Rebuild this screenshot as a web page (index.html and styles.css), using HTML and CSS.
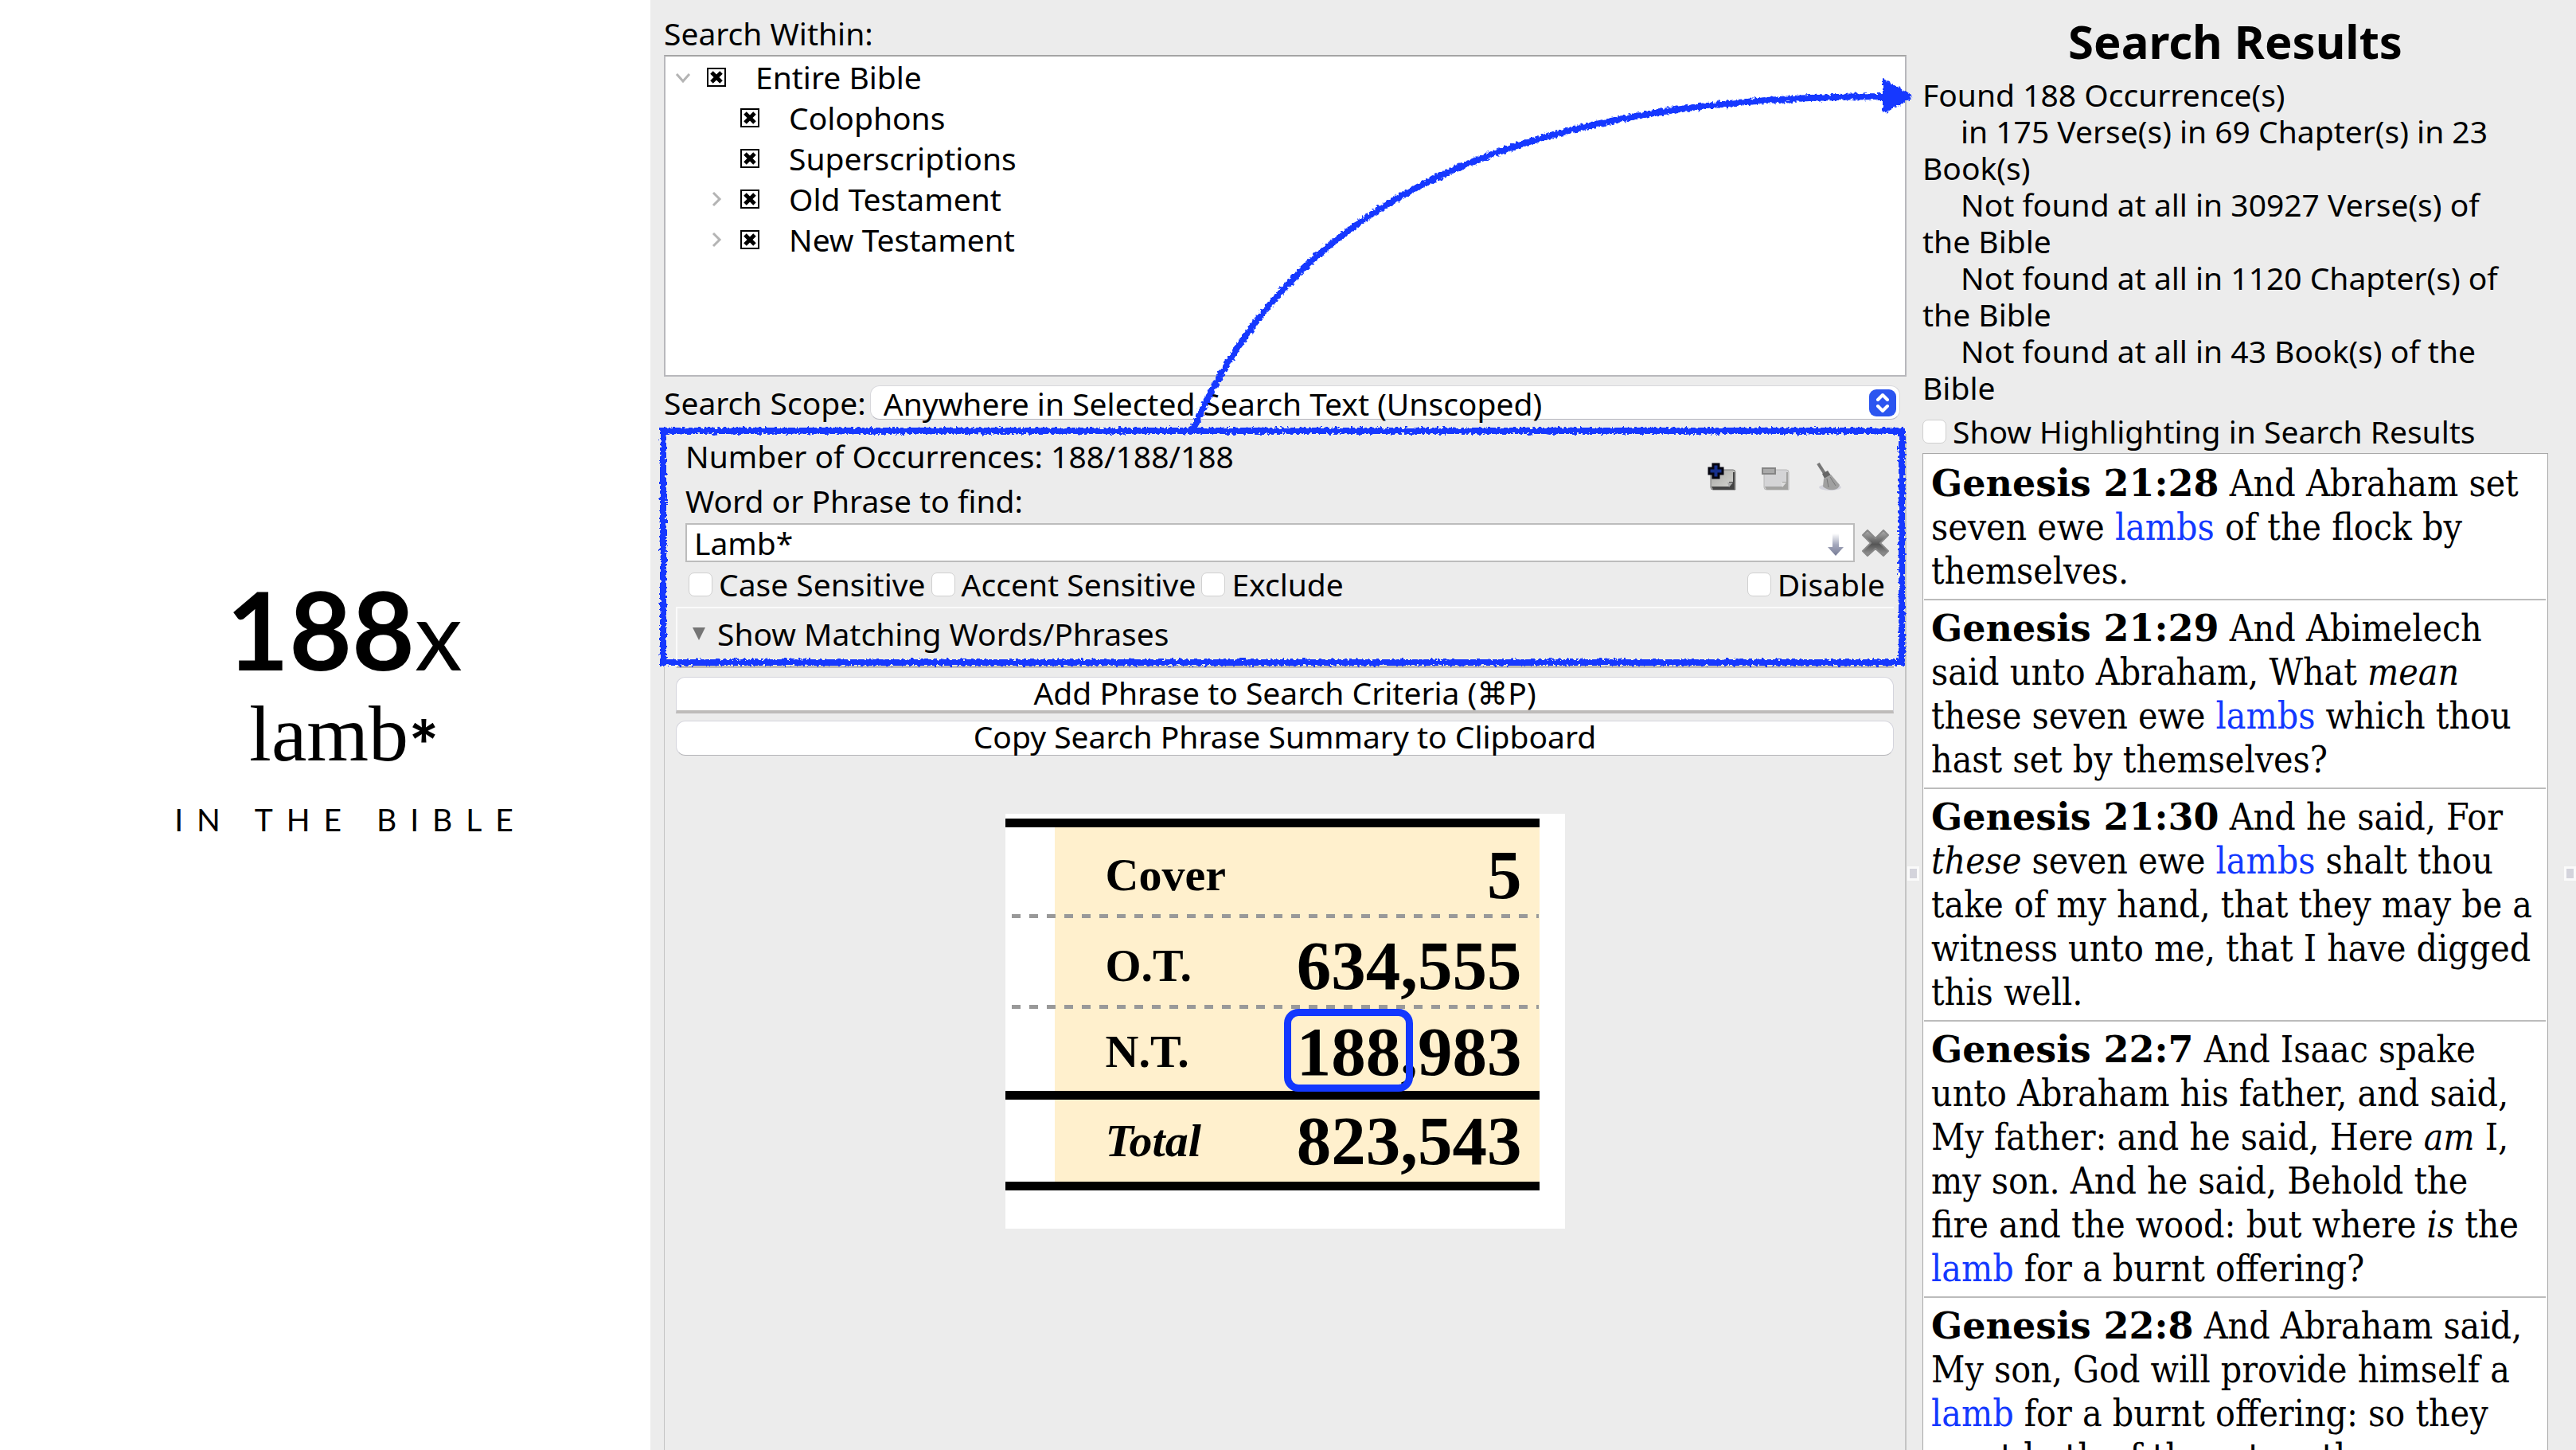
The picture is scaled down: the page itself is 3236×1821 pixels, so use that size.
FILE: index.html
```html
<!DOCTYPE html>
<html lang="en">
<head>
<meta charset="utf-8">
<title>188x lamb* in the Bible</title>
<link rel="stylesheet" href="styles.css">
</head>
<body>
<svg class="defs" width="0" height="0" aria-hidden="true">
  <filter id="rough" x="-2%" y="-5%" width="104%" height="110%">
    <feTurbulence type="fractalNoise" baseFrequency="0.25" numOctaves="2" seed="4" result="noise"/>
    <feDisplacementMap in="SourceGraphic" in2="noise" scale="7" xChannelSelector="R" yChannelSelector="G"/>
  </filter>
</svg>
<main class="app">
  <section class="title">
    <h1 class="title-count">188<span class="title-times">x</span></h1>
    <p class="title-word">lamb<span class="title-star">*</span></p>
    <p class="title-where">IN THE BIBLE</p>
  </section>

  <section class="search">
    <h2 class="label">Search Within:</h2>
    <ul class="tree">
      <li class="tree-row"><svg class="chevron" viewBox="0 0 20 20"><path d="M2 6l8 9 8-9"/></svg><label><input type="checkbox" class="tick" checked>Entire Bible</label></li>
      <li class="tree-row child"><span class="chevron"></span><label><input type="checkbox" class="tick" checked>Colophons</label></li>
      <li class="tree-row child"><span class="chevron"></span><label><input type="checkbox" class="tick" checked>Superscriptions</label></li>
      <li class="tree-row child"><svg class="chevron" viewBox="0 0 20 20"><path d="M6 2l8 8-8 8"/></svg><label><input type="checkbox" class="tick" checked>Old Testament</label></li>
      <li class="tree-row child"><svg class="chevron" viewBox="0 0 20 20"><path d="M6 2l8 8-8 8"/></svg><label><input type="checkbox" class="tick" checked>New Testament</label></li>
    </ul>

    <div class="scope">
      <label for="scope">Search Scope:</label>
      <div class="select-wrap">
        <select id="scope"><option>Anywhere in Selected Search Text (Unscoped)</option></select>
        <svg class="stepper" viewBox="0 0 34 34"><rect width="34" height="34" rx="9" fill="#2b55f0"/><path d="M11 13l6-6 6 6M11 21l6 6 6-6" fill="none" stroke="#fff" stroke-width="4" stroke-linecap="round" stroke-linejoin="round"/></svg>
      </div>
    </div>

    <div class="criteria">
      <div class="phrase">
        <div class="phrase-body">
          <div class="phrase-head">
            <div>
              <p class="line">Number of Occurrences: 188/188/188</p>
              <label class="line" for="find">Word or Phrase to find:</label>
            </div>
            <div class="tools">
              <button class="tool" aria-label="Add phrase"><svg viewBox="0 0 36 36"><defs><linearGradient id="page" x2="1" y2="1"><stop stop-color="#a8a8a4"/><stop offset="1" stop-color="#d8d8d4"/></linearGradient></defs><path d="M4 9h28q3 0 3 3v22H7q-3 0-3-3z" fill="url(#page)" stroke="#777" stroke-width="1"/><path d="M34 12v22H7l-2-4h22v-6h5V12z" fill="#444"/><path d="M25 25h7l-5 6z" fill="#aaa"/><path d="M7 2h7v5h5v7h-5v5H7v-5H2V7h5z" fill="#17308c" stroke="#050510" stroke-width="3"/></svg></button>
              <button class="tool" aria-label="Remove phrase"><svg viewBox="0 0 36 36"><path d="M4 9h28q3 0 3 3v22H7q-3 0-3-3z" fill="#d4d4d6" stroke="#b8b8b8" stroke-width="1"/><path d="M34 12v22H7l-2-4h22v-6h5V12z" fill="#a2a2a0"/><path d="M25 25h7l-5 6z" fill="#ddd"/><path d="M2 7h16v7H2z" fill="#aaa" stroke="#858585" stroke-width="2"/></svg></button>
              <button class="tool" aria-label="Clear phrases"><svg viewBox="0 0 36 36"><ellipse cx="20" cy="31" rx="14" ry="4" fill="#d4d4dc"/><path d="M5 1l9 14" stroke="#777" stroke-width="4"/><path d="M10 14l7-4 4 6-8 4z" fill="#666"/><path d="M12 20l9-5 11 13q-1 5-7 6-9 1-14-4z" fill="#a0a0a0"/><path d="M16 20l2 11M20 18l7 11" stroke="#777" stroke-width="1"/></svg></button>
            </div>
          </div>
          <div class="find">
            <div class="find-box">
              <input type="text" id="find" value="Lamb*">
              <svg class="down" viewBox="0 0 20 28"><defs><linearGradient id="fade" x2="0" y2="1"><stop stop-color="#fff"/><stop offset=".5" stop-color="#a4a8bc"/><stop offset="1" stop-color="#777c96"/></linearGradient></defs><path d="M6 0h8v17h6l-10 11-10-11h6z" fill="url(#fade)"/></svg>
            </div>
            <button class="clear" aria-label="Clear text"><svg viewBox="0 0 34 34"><defs><linearGradient id="steel" x2="0" y2="1"><stop stop-color="#b0b0b0"/><stop offset=".55" stop-color="#555"/><stop offset="1" stop-color="#999"/></linearGradient></defs><path d="M7 1l10 10L27 1l6 6-10 10 10 10-6 6-10-9-10 9-6-6 10-10L1 7z" fill="url(#steel)" stroke="#888" stroke-width="2" stroke-linejoin="round"/></svg></button>
          </div>
          <div class="options">
            <label><input type="checkbox" class="box">Case Sensitive</label>
            <label><input type="checkbox" class="box">Accent Sensitive</label>
            <label><input type="checkbox" class="box">Exclude</label>
            <label class="last"><input type="checkbox" class="box">Disable</label>
          </div>
        </div>
        <button class="matching"><svg viewBox="0 0 18 18"><path d="M1 1h16L9 17z" fill="#757575"/></svg>Show Matching Words/Phrases</button>
        <div class="frame"></div>
      </div>
      <button class="push push-add">Add Phrase to Search Criteria (⌘P)</button>
      <button class="push">Copy Search Phrase Summary to Clipboard</button>

      <div class="card">
        <table class="counts">
          <tr class="dashed"><td></td><th scope="row">Cover</th><td class="num">5</td></tr>
          <tr class="dashed"><td></td><th scope="row">O.T.</th><td class="num">634,555</td></tr>
          <tr class="solid"><td></td><th scope="row">N.T.</th><td class="num"><span class="ring">188</span>,983</td></tr>
          <tr class="total"><td></td><th scope="row"><em>Total</em></th><td class="num">823,543</td></tr>
        </table>
      </div>
    </div>

    <svg class="arrow" viewBox="0 0 1578 546" preserveAspectRatio="none" aria-hidden="true">
      <g filter="url(#rough)">
        <path d="M681 541C805 255 1080 121 1552 121" fill="none" stroke="#1338ff" stroke-width="8"/>
        <path d="M1548 99l35 19q3 3 0 6l-35 19z" fill="#1338ff"/>
      </g>
    </svg>
  </section>

  <section class="results">
    <h2 class="results-title">Search Results</h2>
    <div class="stats">
      <p>Found 188 Occurrence(s)</p>
      <p class="in">in 175 Verse(s) in 69 Chapter(s) in 23 Book(s)</p>
      <p class="in">Not found at all in 30927 Verse(s) of the Bible</p>
      <p class="in">Not found at all in 1120 Chapter(s) of the Bible</p>
      <p class="in">Not found at all in 43 Book(s) of the Bible</p>
    </div>
    <label class="highlight"><input type="checkbox" class="box">Show Highlighting in Search Results</label>
    <div class="verses">
      <p><b>Genesis 21:28</b> And Abraham set seven ewe <a href="#">lambs</a> of the flock by themselves.</p>
      <p><b>Genesis 21:29</b> And Abimelech said unto Abraham, What <i>mean</i> these seven ewe <a href="#">lambs</a> which thou hast set by themselves?</p>
      <p><b>Genesis 21:30</b> And he said, For <i>these</i> seven ewe <a href="#">lambs</a> shalt thou take of my hand, that they may be a witness unto me, that I have digged this well.</p>
      <p><b>Genesis 22:7</b> And Isaac spake unto Abraham his father, and said, My father: and he said, Here <i>am</i> I, my son. And he said, Behold the fire&nbsp;and the wood: but where <i>is</i> the <a href="#">lamb</a> for a burnt offering?</p>
      <p><b>Genesis 22:8</b> And Abraham said, My son, God will provide himself a <a href="#">lamb</a> for a burnt offering: so they went both of them together.</p>
    </div>
    <span class="grip grip-left"></span>
    <span class="grip grip-right"></span>
  </section>
</main>
</body>
</html>
```
FILE: styles.css
```css
* { box-sizing: border-box; margin: 0; padding: 0; }

body {
  background: #fff;
  color: #000;
  font: 39px/50px "Noto Sans", "DejaVu Sans", sans-serif;
}

h1, h2 { font-weight: 400; font-size: inherit; }
button, input, select { font: inherit; color: inherit; }
button { border: 0; background: none; }
ul { list-style: none; }

.defs { position: absolute; }

.app {
  display: grid;
  grid-template-columns: 817fr 1578fr 841fr;
  height: 100vh;
  overflow: hidden;
}

/* Title */
.title {
  display: flex;
  flex-direction: column;
  align-items: center;
  justify-content: center;
  padding: 0 0 28px 48px;
  font-family: Lato, sans-serif;
}
.title-count { font-size: 136px; line-height: 132px; font-weight: 700; }
.title-times { font-size: 120px; font-weight: 400; }
.title-word { font: 100px/120px "Liberation Serif", serif; }
.title-star { font-family: Inter, sans-serif; font-weight: 600; font-size: 72px; }
.title-where { padding-left: 16px; font-size: 39px; line-height: 80px; letter-spacing: 17px; }

/* Search column */
.search {
  position: relative;
  display: flex;
  flex-direction: column;
  min-width: 0;
  padding: 17px 0 0 17px;
  background: #ececec;
}

.tree {
  height: 404px;
  margin-top: 2px;
  border: 2px solid #b8b8bc;
  border-top-color: #a4a4a4;
  background: #fff;
  line-height: 51px;
}
.tree-row { display: flex; align-items: center; gap: 20px; padding-left: 12px; }
.tree-row.child { padding-left: 54px; }
.chevron { width: 20px; height: 20px; fill: none; stroke: #b4b4b4; stroke-width: 3; }
.tree-row label { display: flex; align-items: center; gap: 37px; }
.tick {
  appearance: none;
  width: 24px;
  height: 24px;
  border: 2px solid #000;
  background: url("data:image/svg+xml,%3Csvg xmlns='http://www.w3.org/2000/svg' viewBox='0 0 20 20'%3E%3Cpath d='M4 4l12 12M16 4L4 16' stroke='%23000' stroke-width='5'/%3E%3C/svg%3E") center / 20px 20px;
}

.scope { display: flex; align-items: center; gap: 5px; margin-top: 11px; line-height: 43px; white-space: nowrap; }
.select-wrap {
  position: relative;
  flex: 1;
  height: 43px;
  margin-right: 8px;
  border: 1px solid #d8d8dc;
  border-bottom-color: #b8b8c0;
  border-radius: 12px;
  background: #fff;
}
.scope select {
  display: block;
  appearance: none;
  width: 100%;
  height: 56px;
  margin: -6px 0;
  padding: 0 16px;
  border: 0;
  background: none;
  line-height: 56px;
}
.stepper { position: absolute; top: 4px; right: 4px; width: 34px; height: 34px; pointer-events: none; }

.criteria {
  flex: 1;
  margin-top: 18px;
  padding: 0 14px;
  border: solid #c4c4c4;
  border-width: 0 2px 0 1px;
}
.phrase { position: relative; }
.frame { position: absolute; inset: -8px -14px 3px -20px; border: 8px solid #1338ff; filter: url(#rough); pointer-events: none; }
.phrase-body { padding: 0 6px 0 12px; }
.phrase-head { display: flex; align-items: center; justify-content: space-between; }
.line { display: block; line-height: 56px; }
.tools { display: flex; gap: 31px; padding: 0 58px 4px 0; }
.tool, .clear { display: flex; }
.tool svg { width: 36px; height: 36px; }

.find { display: flex; align-items: center; gap: 9px; }
.find-box { position: relative; flex: 1; }
.find input {
  display: block;
  width: 100%;
  height: 49px;
  padding: 0 9px;
  border: 2px solid #bcbcbc;
  background: #fff;
}
.down { position: absolute; top: 13px; right: 14px; width: 20px; height: 28px; }
.clear svg { width: 34px; height: 36px; }

.options { display: flex; gap: 7px; height: 56px; padding-left: 4px; }
.options label, .highlight { display: flex; align-items: center; gap: 8px; white-space: nowrap; }
.options .last { margin-left: auto; padding-right: 5px; }
.box {
  appearance: none;
  width: 30px;
  height: 30px;
  border: 1px solid #d0d0d0;
  border-radius: 7px;
  background: #fff;
}

.matching {
  display: flex;
  align-items: center;
  gap: 14px;
  width: 100%;
  height: 77px;
  padding: 0 18px 8px;
  border: solid #fafafa;
  border-width: 2px 0 3px 2px;
  border-bottom-color: #bebcba;
}
.matching svg { width: 18px; height: 18px; }

.push {
  display: block;
  width: 100%;
  height: 44px;
  margin-top: 9px;
  padding-bottom: 4px;
  border: 1px solid #d4d4dc;
  border-bottom-color: #b4b4b8;
  border-radius: 12px;
  background: #fff;
  line-height: 38px;
}
.push-add { height: 46px; margin-top: 11px; border-bottom: 4px solid #bebcba; border-radius: 12px 12px 0 0; }

/* Letter-count table */
.card { width: 703px; height: 521px; margin: 73px auto 0; padding-top: 6px; background: #fff; }
.counts {
  width: 671px;
  border-collapse: separate;
  border-spacing: 0;
  border: solid #000;
  border-width: 11px 0;
  background: linear-gradient(90deg, #fff 62px, #fff0cd 62px);
  font-family: "Liberation Serif", serif;
  font-weight: 700;
}
.counts tr { height: 103px; }
.counts tr.dashed {
  height: 114px;
  background: repeating-linear-gradient(90deg, #999 0 11px, transparent 11px 22px) 8px 109px / 663px 5px no-repeat;
}
.counts tr.solid { height: 114px; }
.solid > * { border-bottom: 11px solid #000; }
.counts td:first-child { width: 126px; }
.counts th { font-size: 58px; text-align: left; line-height: 64px; }
.counts .num { padding-right: 22px; font-size: 87px; line-height: 92px; text-align: right; }
.dashed .num, .dashed th { padding-top: 6px; }
.solid .num, .solid th { padding-top: 4px; }
.ring { position: relative; }
.ring::after { content: ""; position: absolute; inset: -5px -16px -2px -16px; border: 9px solid #1338ff; border-radius: 18px; }

.arrow { position: absolute; top: 0; left: 0; width: 100%; height: 546px; overflow: visible; pointer-events: none; z-index: 1; }

/* Results column */
.results {
  position: relative;
  display: flex;
  flex-direction: column;
  min-width: 0;
  min-height: 0;
  padding: 20px 35px 0 20px;
  background: #ececec;
}
.results-title { font-size: 58px; line-height: 64px; font-weight: 700; text-align: center; }
.stats { margin-top: 12px; padding-right: 46px; line-height: 46px; }
.stats .in { text-indent: 48px; }
.highlight { height: 54px; margin-top: 5px; }
.verses {
  flex: 1;
  min-height: 0;
  overflow: hidden;
  padding: 2px 2px 0 1px;
  border: solid #a8a8a8;
  border-width: 1px 1px 0;
  background: #fff;
  font: 46px/55px "DejaVu Serif Condensed", "DejaVu Serif", serif;
}
.verses p { padding: 8px 8px 7px 9px; border-bottom: 2px solid #bcbcbc; }
.verses b { font-family: "DejaVu Serif", serif; }
.verses a { color: #1338ff; text-decoration: none; }

.grip { position: absolute; top: 1088px; width: 15px; height: 18px; border: 3px solid #fafafa; background: #d4d4dc; }
.grip-left { left: 1px; }
.grip-right { right: 0; }
```
